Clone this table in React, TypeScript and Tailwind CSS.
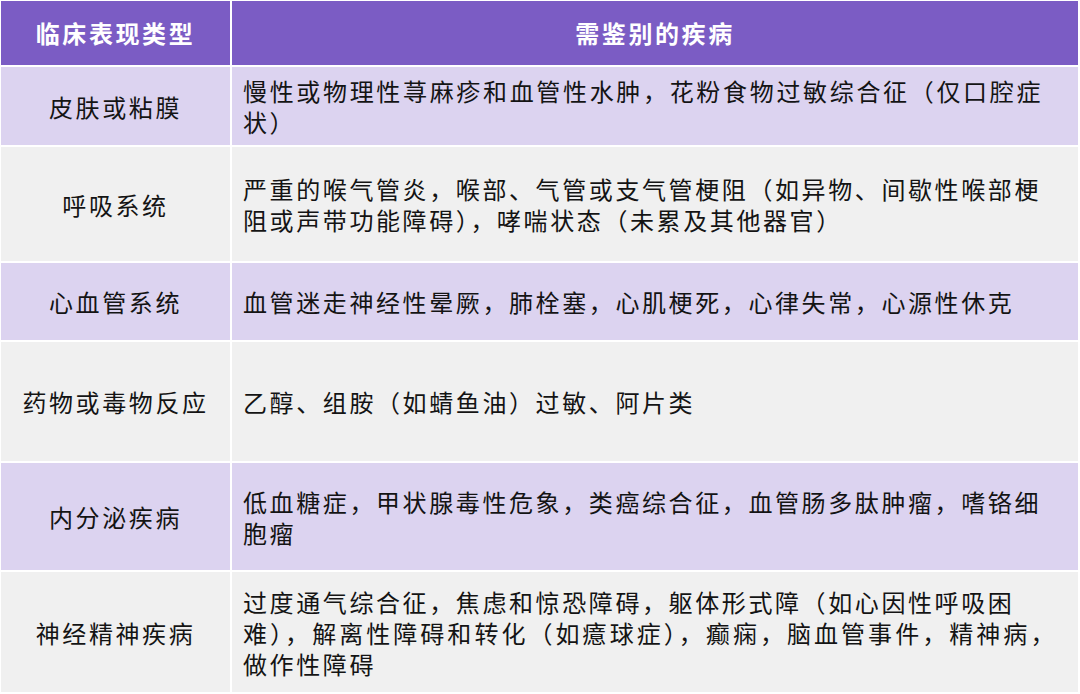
import React from "react";

type Line = { t: string; w?: string };
type Row = { k: string; lines: Line[]; bg: string; h: string };

const rows: Row[] = [
  {
    k: "皮肤或粘膜",
    bg: "bg-[#dcd3f0]",
    h: "h-[78px]",
    lines: [
      { t: "慢性或物理性荨麻疹和血管性水肿，花粉食物过敏综合征（仅口腔症", w: "w-[800px]" },
      { t: "状）" },
    ],
  },
  {
    k: "呼吸系统",
    bg: "bg-[#f0f0f0]",
    h: "h-[114px]",
    lines: [
      { t: "严重的喉气管炎，喉部、气管或支气管梗阻（如异物、间歇性喉部梗", w: "w-[798px]" },
      { t: "阻或声带功能障碍），哮喘状态（未累及其他器官）" },
    ],
  },
  {
    k: "心血管系统",
    bg: "bg-[#dcd3f0]",
    h: "h-[77px]",
    lines: [{ t: "血管迷走神经性晕厥，肺栓塞，心肌梗死，心律失常，心源性休克" }],
  },
  {
    k: "药物或毒物反应",
    bg: "bg-[#f0f0f0]",
    h: "h-[119px]",
    lines: [{ t: "乙醇、组胺（如蜻鱼油）过敏、阿片类" }],
  },
  {
    k: "内分泌疾病",
    bg: "bg-[#dcd3f0]",
    h: "h-[107px]",
    lines: [
      { t: "低血糖症，甲状腺毒性危象，类癌综合征，血管肠多肽肿瘤，嗜铬细", w: "w-[798px]" },
      { t: "胞瘤" },
    ],
  },
  {
    k: "神经精神疾病",
    bg: "bg-[#f0f0f0]",
    h: "h-[120px]",
    lines: [
      { t: "过度通气综合征，焦虑和惊恐障碍，躯体形式障（如心因性呼吸困", w: "w-[771px]" },
      { t: "难），解离性障碍和转化（如癔球症），癫痫，脑血管事件，精神病，", w: "w-[814px]" },
      { t: "做作性障碍" },
    ],
  },
];

const font = { fontFamily: '"Noto Sans CJK SC", "Noto Sans", sans-serif' };

export default function App() {
  return (
    <div className="w-[1080px] h-[694px] bg-white pt-[1px] pl-[1px] overflow-hidden" style={font}>
      <div className="grid grid-cols-[229px_846px] gap-[2px]">
        <div className="h-[64px] bg-[#7b5cc4] flex items-center justify-center text-white font-bold text-[24px] tracking-[2.6px]">
          临床表现类型
        </div>
        <div className="h-[64px] bg-[#7b5cc4] flex items-center justify-center text-white font-bold text-[24px] tracking-[2.6px]">
          需鉴别的疾病
        </div>
        {rows.map((r) => (
          <React.Fragment key={r.k}>
            <div
              className={`${r.h} ${r.bg} flex items-center justify-center text-[#141414] text-[24px] tracking-[2.6px] leading-[31px]`}
            >
              {r.k}
            </div>
            <div
              className={`${r.h} ${r.bg} flex flex-col justify-center pl-[11px] text-[#141414] text-[24px] tracking-[2.6px] leading-[31px]`}
            >
              {r.lines.map((l, i) =>
                l.w ? (
                  <div
                    key={i}
                    className={`${l.w} whitespace-nowrap text-justify [text-align-last:justify]`}
                  >
                    {l.t}
                  </div>
                ) : (
                  <div key={i} className="whitespace-nowrap">
                    {l.t}
                  </div>
                )
              )}
            </div>
          </React.Fragment>
        ))}
      </div>
    </div>
  );
}
